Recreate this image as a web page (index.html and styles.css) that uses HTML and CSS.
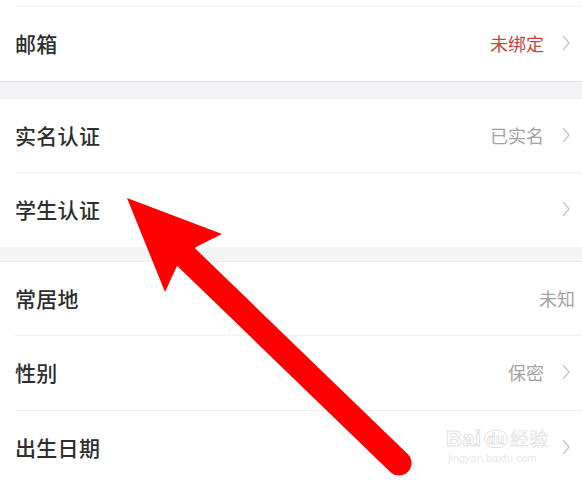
FILE: index.html
```html
<!DOCTYPE html>
<html lang="zh-CN">
<head>
<meta charset="utf-8">
<title>个人信息</title>
<link rel="stylesheet" href="styles.css">
</head>
<body>
<div class="page">
  <section class="group">
    <div class="stub"></div>
    <div class="row">
      <span class="label">邮箱</span>
      <span class="value warn">未绑定</span>
      <svg class="chev" viewBox="0 0 8 16" width="8" height="16"><polyline points="1,1 7,8 1,15"/></svg>
    </div>
  </section>
  <section class="group gap16">
    <div class="row">
      <span class="label">实名认证</span>
      <span class="value">已实名</span>
      <svg class="chev" viewBox="0 0 8 16" width="8" height="16"><polyline points="1,1 7,8 1,15"/></svg>
    </div>
    <div class="row">
      <span class="label">学生认证</span>
      <svg class="chev" viewBox="0 0 8 16" width="8" height="16"><polyline points="1,1 7,8 1,15"/></svg>
    </div>
  </section>
  <section class="group gap14">
    <div class="row nochev">
      <span class="label">常居地</span>
      <span class="value">未知</span>
    </div>
    <div class="row">
      <span class="label">性别</span>
      <span class="value">保密</span>
      <svg class="chev" viewBox="0 0 8 16" width="8" height="16"><polyline points="1,1 7,8 1,15"/></svg>
    </div>
    <div class="row">
      <span class="label">出生日期</span>
      <svg class="chev" viewBox="0 0 8 16" width="8" height="16"><polyline points="1,1 7,8 1,15"/></svg>
    </div>
  </section>

  <div class="watermark">
    <div class="wm-main">Bai<span class="wm-du">du</span><span class="wm-cn">经验</span></div>
    <div class="wm-sub">jingyan.baidu.com</div>
  </div>

  <svg class="arrow" width="582" height="480" viewBox="0 0 582 480">
    <line x1="186" y1="257" x2="399" y2="463" stroke="#fe0000" stroke-width="25" stroke-linecap="round"/>
    <polygon points="127,198 222,234 196,247 177,266 165,292" fill="#fe0000"/>
  </svg>
</div>
</body>
</html>
```

FILE: styles.css
```css
html, body {
  margin: 0;
  padding: 0;
}
body {
  background: #f4f4f6;
  font-family: "Noto Sans CJK SC", "Noto Sans", sans-serif;
  overflow: hidden;
}
.page {
  position: relative;
  width: 582px;
  height: 480px;
  overflow: hidden;
}
.group {
  background: #fff;
  padding-left: 15px;
}
.group.gap16 { margin-top: 16px; border-top: 1px solid #f0f0f2; }
.group.gap14 { margin-top: 14px; border-top: 1px solid #f0f0f2; }
.group:first-child { border-bottom: 1px solid #e6e6e8; }
.stub { height: 6px; }
.row {
  display: flex;
  align-items: center;
  height: 72px;
  padding-bottom: 2px;
  padding-right: 12px;
  border-top: 1px solid #efeff1;
}
.gap16 .row:first-child, .gap14 .row:first-child { border-top: none; height: 71px; }
.label {
  flex: 1;
  font-size: 21px;
  font-weight: 500;
  color: #2e2e2e;
  letter-spacing: 0.3px;
}
.value {
  font-size: 18px;
  color: #a3a3a3;
  margin-right: 18px;
}
.value.warn { color: #c4473d; }
.nochev .value { margin-right: -5px; }
.chev {
  display: block;
  fill: none;
  stroke: #c9c9c9;
  stroke-width: 1.4;
}
.arrow {
  position: absolute;
  left: 0;
  top: 0;
  pointer-events: none;
}
.watermark {
  position: absolute;
  left: 446px;
  top: 426px;
  color: #fff;
  font-family: "Liberation Sans", sans-serif;
  pointer-events: none;
}
.wm-main {
  font-size: 22px;
  line-height: 24px;
  -webkit-text-stroke: 1px #e2e2e2;
  font-weight: bold;
  letter-spacing: 0.5px;
}
.wm-du {
  font-size: 14px;
  border: 1px solid #e2e2e2;
  border-radius: 9px;
  padding: 0 2px;
  margin: 0 2px;
  -webkit-text-stroke: 0.8px #e2e2e2;
  vertical-align: 2px;
}
.wm-cn {
  font-family: "Noto Sans CJK SC", sans-serif;
  font-weight: normal;
  font-size: 19px;
  color: #fff;
  -webkit-text-stroke: 0.6px #e0e0e0;
}
.wm-sub {
  font-size: 11px;
  color: #e8e8e8;
  margin-top: 1px;
  padding-left: 2px;
}
```
